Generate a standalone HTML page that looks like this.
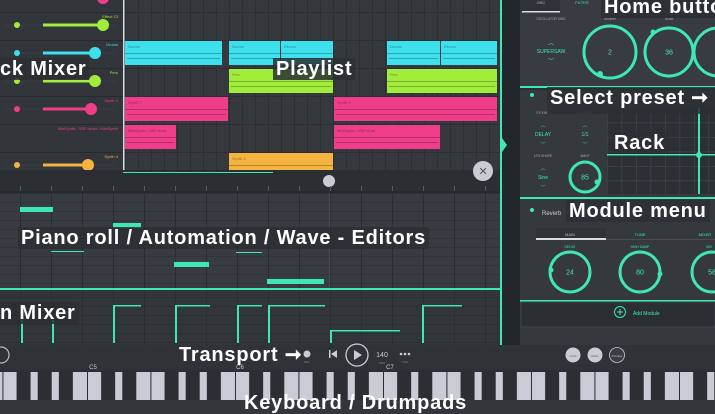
<!DOCTYPE html>
<html><head><meta charset="utf-8"><style>
html,body{margin:0;padding:0;width:715px;height:400px;overflow:hidden;background:#33373c;font-family:"Liberation Sans",sans-serif}
svg{position:absolute;left:0;top:0}
.lb{position:absolute;color:#fff;font-weight:bold;font-size:20px;line-height:22px;background:rgba(44,47,52,.85);padding:0 3px;white-space:nowrap;letter-spacing:.8px}
</style></head><body>
<svg id="s" width="715" height="400" xmlns="http://www.w3.org/2000/svg" font-family="Liberation Sans, sans-serif">
<rect width="715" height="400" fill="#33373c"/>
<g id="g"></g>
</svg>
<div class="lb" style="left:-3px;top:58px">ck Mixer</div>
<div class="lb" style="left:273px;top:58px">Playlist</div>
<div class="lb" style="left:601px;top:-4px">Home butto</div>
<div class="lb" style="left:547px;top:87px">Select preset ➞ <span style="font-size:7px;font-weight:normal;color:#bbb">De</span></div>
<div class="lb" style="left:611px;top:132px">Rack</div>
<div class="lb" style="left:566px;top:200px">Module menu</div>
<div class="lb" style="left:18px;top:227px">Piano roll / Automation / Wave - Editors</div>
<div class="lb" style="left:-3px;top:302px">n Mixer</div>
<div class="lb" style="left:176px;top:344px;background:none">Transport ➞</div>
<div class="lb" style="left:241px;top:392px;background:none">Keyboard / Drumpads</div>
<script>
var g=document.getElementById('g'),h='';
function R(x,y,w,hh,c,o){h+='<rect x="'+x+'" y="'+y+'" width="'+w+'" height="'+hh+'" fill="'+c+'"'+(o||'')+'/>';}
function C(x,y,r,c,o){h+='<circle cx="'+x+'" cy="'+y+'" r="'+r+'" fill="'+c+'"'+(o||'')+'/>';}
function T(x,y,s,c,t,o){h+='<text x="'+x+'" y="'+y+'" font-size="'+s+'" fill="'+c+'"'+(o||'')+'>'+t+'</text>';}
function L(x1,y1,x2,y2,c,w){h+='<line x1="'+x1+'" y1="'+y1+'" x2="'+x2+'" y2="'+y2+'" stroke="'+c+'" stroke-width="'+(w||1)+'"/>';}
var teal='#3ee8b5';
R(0,0,123,170,'#32363b');
[12,40,68,96,124,152].forEach(function(y){R(0,y,123,1,'#26292d');});
C(103,-2,6,'#f03d8a');
var mx=[[12,'#a2ec3c','Effect 13',103],[40,'#3de0ec','Drums',95],[68,'#a2ec3c','Perc',95],[96,'#f03d8a','Synth 2',91],[152,'#f5b340','Synth 4',88]];
mx.forEach(function(m){var y=m[0]+13;T(118,m[0]+6,4,m[1],m[2],' text-anchor="end"');L(5,y,115,y,'#3a3e44',1);C(17,y,3,m[1]);R(43,y-1.5,m[3]-43,3,m[1]);C(m[3],y,6,m[1]);});
T(118,130,4,'#f03d8a','MiniSynth - SSF Ambt - MiniSynth',' text-anchor="end"');
R(123,0,377,170,'#35393e');
for(var x=125;x<500;x+=13)R(x,0,1,170,'#2b2e33');
[12,40,68,96,124,152].forEach(function(y){R(123,y,377,1,'#2b2e33');});
R(123,0,1.5,170,'#d8dde2');
function clip(x,y,w,c,n){R(x,y,w,24,c);R(x,y+12,w,1,'rgba(0,0,0,.25)');T(x+3,y+7,4,'rgba(0,0,0,.4)',n);R(x+2,y+17,w-4,1,'rgba(0,0,0,.25)');}
clip(125,41,97,'#3de0ec','Drums');clip(229,41,51,'#3de0ec','Drums');clip(281,41,52,'#3de0ec','Drums');clip(387,41,53,'#3de0ec','Drums');clip(441,41,56,'#3de0ec','Drums');
clip(229,69,104,'#a2ec3c','Perc');clip(387,69,110,'#a2ec3c','Perc');
clip(125,97,103,'#f03d8a','Synth 2');clip(334,97,163,'#f03d8a','Synth 2');
clip(125,125,51,'#f03d8a','MiniSynth - SSF Amb');clip(334,125,106,'#f03d8a','MiniSynth - SSF Amb');
clip(229,153,104,'#f5b340','Synth 4');
R(0,170,500,22,'#2b2e33');R(123,172,150,1,teal);
C(329,181,6,'#c9ccd3');C(483,171,10,'#c9ccd3');T(478.5,175,11,'#555','✕');
R(0,191,500,2,'#26292d');
for(x=20;x<500;x+=31)R(x,186,1,5,'#555a60');
R(0,193,500,95,'#383c42');
for(var y=193;y<288;y+=9)R(0,y,500,1,'#30343a');
for(x=20;x<500;x+=31)R(x,193,1,95,'#2a2d32');
R(329,193,1,95,'#4a4e55');
[[20,207,33],[113,223,28],[174,262,35],[267,279,57]].forEach(function(n){R(n[0],n[1],n[2],5,teal);});
R(51,251,33,1,teal);R(236,252,26,1,teal);
R(0,288,500,2,teal);
R(0,290,500,55,'#32363b');
for(y=297;y<345;y+=9)R(0,y,500,1,'#2c2f34');
for(x=20;x<500;x+=31)R(x,290,1,55,'#2a2d32');
[[21,320,0],[52,320,0],[113,305,28],[175,305,35],[237,305,25],[268,305,57],[330,330,70],[422,305,40]].forEach(function(a){R(a[0],a[1],2,343-a[1],teal);if(a[2])R(a[0],a[1],a[2],1.5,teal);});
R(0,345,500,25,'#2f3237');
C(1,355,8,'none',' stroke="#bbb" stroke-width="1.2"');
C(307,354,3.5,'#c9ccd3');T(307,363,2.5,'#888','REC',' text-anchor="middle"');
R(329,350,1.5,8,'#c9ccd3');h+='<path d="M337 350 L331 354 L337 358Z" fill="#c9ccd3"/>';
C(357,355,11,'none',' stroke="#c9ccd3" stroke-width="1.3"');h+='<path d="M354 350 L362 355 L354 360Z" fill="#c9ccd3"/>';
T(382,357,7,'#c9ccd3','140',' text-anchor="middle"');T(382,364,2.5,'#888','BPM',' text-anchor="middle"');
C(401,354,1.3,'#c9ccd3');C(405,354,1.3,'#c9ccd3');C(409,354,1.3,'#c9ccd3');T(405,363,2.5,'#888','CTRL',' text-anchor="middle"');
R(0,370,715,30,'#2b2e33');
var wk=148/7,x0=88-148*2;
for(var i=0;i<50;i++){var kx=x0+i*wk;R(kx,372,wk-1,28,'#c8ccd4');}
for(var o=0;o<7;o++){var ox=x0+o*148;[1,2,4,5,6].forEach(function(k){R(ox+k*wk-8,372,14,28,'#2b2e33');});}
[['C5',93],['C6',240],['C7',390],['C8',538]].forEach(function(c){T(c[1],369,6,'#c9ccd3',c[0],' text-anchor="middle"');});
R(500,0,20,345,'#23262a');R(500,0,2,345,teal);h+='<path d="M502 138 L507 145 L502 152Z" fill="'+teal+'"/>';
R(520,0,195,345,'#35393e');
R(520,0,195,86,'#383c42');
R(520,0,40,11,'#2f3237');T(541,4,4,'#bbb','OSC',' text-anchor="middle"');T(582,4,4,teal,'FILTER',' text-anchor="middle"');R(522,11,38,1.5,'#d8dde2');
T(551,20,3.3,'#aaa','OSCILLATOR KIND',' text-anchor="middle"');T(610,20,3.3,'#aaa','Modifier',' text-anchor="middle"');T(669,20,3.3,'#aaa','Noise',' text-anchor="middle"');
T(551,53,5,teal,'SUPERSAW',' text-anchor="middle"');T(551,45,6,teal,'︿',' text-anchor="middle"');T(551,63,6,teal,'﹀',' text-anchor="middle"');
function knob(cx,cy,r,v,a1,a2,w){h+='<circle cx="'+cx+'" cy="'+cy+'" r="'+r+'" fill="none" stroke="'+teal+'" stroke-width="'+(w||3)+'"/>';T(cx,cy+2.5,7,teal,v,' text-anchor="middle"');}
knob(610,52,26,'2');C(600,74,3,teal);knob(669,52,24,'36');C(653,32,2.5,teal);knob(718,52,24,'');
R(520,86,195,2,teal);R(520,88,195,2,'#2b2e33');
C(532,95,2,teal);
T(543,114,3.3,'#aaa','FX KIND',' text-anchor="middle"');T(585,114,3.3,'#aaa','LFO RATE',' text-anchor="middle"');
T(543,136,5,teal,'DELAY',' text-anchor="middle"');T(585,136,5,teal,'1/1',' text-anchor="middle"');
T(543,157,3.3,'#aaa','LFO SHAPE',' text-anchor="middle"');T(585,157,3.3,'#aaa','AMNT',' text-anchor="middle"');
T(543,179,5,teal,'Sine',' text-anchor="middle"');knob(585,177,15,'85');C(597,182,2.5,teal);
[[543,127],[585,127],[543,170]].forEach(function(a){T(a[0],a[1],5,teal,'︿',' text-anchor="middle"');T(a[0],a[1]+19,5,teal,'﹀',' text-anchor="middle"');});
R(607,108,108,86,'#2c2f34');
for(x=607;x<715;x+=14.5)R(x,108,0.7,86,'#42464c');for(y=108;y<194;y+=14.5)R(607,y,108,0.7,'#42464c');
R(698,108,2,86,teal);R(607,154,108,1.5,teal);C(699,155,3,teal);
R(520,197,195,2,teal);
C(532,210,2,teal);T(542,215,6,'#ccc','Reverb');
R(536,228,70,12,'#2f3237');T(570,236,4,'#bbb','MAIN',' text-anchor="middle"');T(640,236,4,teal,'TUNE',' text-anchor="middle"');T(705,236,4,teal,'MIXER',' text-anchor="middle"');
R(536,238,70,2,'#d8dde2');R(606,239,109,1,'#4a4e55');
T(570,248,3.3,teal,'DECAY',' text-anchor="middle"');T(640,248,3.3,teal,'HIGH DAMP',' text-anchor="middle"');T(709,248,3.3,teal,'MIX',' text-anchor="middle"');
knob(570,272,20,'24');C(551,270,2.5,teal);knob(640,272,20,'80');C(660,274,2.5,teal);knob(712,272,20,'58');
R(520,300,195,2,teal);R(521,302,194,25,'#2b2e33',' stroke="#3e4248"');
C(620,312,5.5,'none',' stroke="'+teal+'" stroke-width="1"');R(617,311.5,6,1,teal);R(619.5,309,1,6,teal);T(633,315,5,teal,'Add Module');
R(500,345,215,25,'#2f3237');
C(573,355,7.5,'#c9ccd3');T(573,357,3,'#555','Undo',' text-anchor="middle"');C(595,355,7.5,'#c9ccd3');T(595,357,3,'#555','Redo',' text-anchor="middle"');C(617,355,7.5,'#3a3e44',' stroke="#c9ccd3" stroke-width="0.8"');T(617,357,3,'#ccc','Preview',' text-anchor="middle"');
g.innerHTML=h;
</script>
</body></html>
